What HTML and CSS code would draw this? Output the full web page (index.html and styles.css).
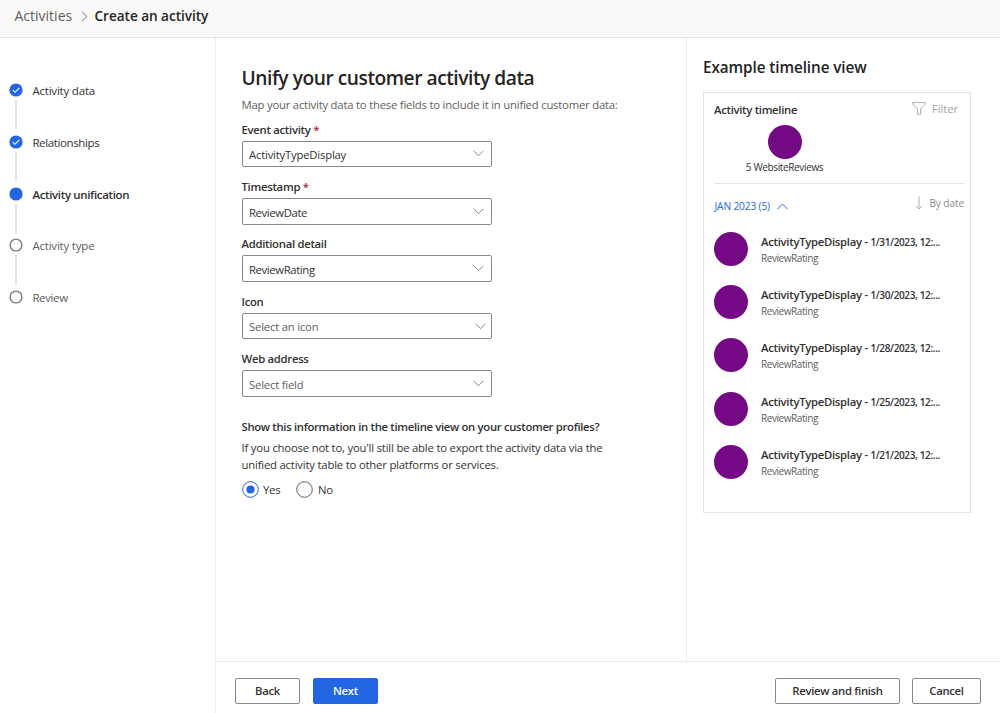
FILE: index.html
```html
<!DOCTYPE html>
<html lang="en">
<head>
<meta charset="utf-8">
<title>Create an activity</title>
<link rel="stylesheet" href="styles.css">
</head>
<body>
<header class="topbar">
  <a class="crumb">Activities</a>
  <svg class="crumb-sep" width="7" height="11" viewBox="0 0 7 11"><path d="M1 .8 5.8 5.5 1 10.2"/></svg>
  <span class="crumb-current">Create an activity</span>
</header>
<div class="body">
  <nav class="steps">
    <div class="step done"><svg class="dot" viewBox="0 0 14 14"><circle cx="7" cy="7" r="6.6"/><path d="M3.8 7.2 6 9.3 10.4 4.9"/></svg><span class="step-name">Activity data</span></div>
    <div class="step done"><svg class="dot" viewBox="0 0 14 14"><circle cx="7" cy="7" r="6.6"/><path d="M3.8 7.2 6 9.3 10.4 4.9"/></svg><span class="step-name tight">Relationships</span></div>
    <div class="step current"><svg class="dot" viewBox="0 0 14 14"><circle cx="7" cy="7" r="6.6"/></svg><span class="step-name">Activity unification</span></div>
    <div class="step todo"><svg class="dot" viewBox="0 0 14 14"><circle cx="7" cy="7" r="5.9"/></svg><span class="step-name">Activity type</span></div>
    <div class="step todo"><svg class="dot" viewBox="0 0 14 14"><circle cx="7" cy="7" r="5.9"/></svg><span class="step-name tight">Review</span></div>
  </nav>
  <div class="main">
    <div class="columns">
      <section class="form">
        <h1 class="title">Unify your customer activity data</h1>
        <p class="subtitle">Map your activity data to these fields to include it in unified customer data:</p>
        <div class="field"><label class="label">Event activity <b class="req">*</b></label><div class="select"><span>ActivityTypeDisplay</span><svg class="chev" viewBox="0 0 11 7"><path d="M.6.8 5.5 5.7 10.4.8"/></svg></div></div>
        <div class="field"><label class="label">Timestamp <b class="req">*</b></label><div class="select"><span class="tight">ReviewDate</span><svg class="chev" viewBox="0 0 11 7"><path d="M.6.8 5.5 5.7 10.4.8"/></svg></div></div>
        <div class="field"><label class="label">Additional detail</label><div class="select"><span class="tight">ReviewRating</span><svg class="chev" viewBox="0 0 11 7"><path d="M.6.8 5.5 5.7 10.4.8"/></svg></div></div>
        <div class="field"><label class="label">Icon</label><div class="select empty wide"><span>Select an icon</span><svg class="chev" viewBox="0 0 11 7"><path d="M.6.8 5.5 5.7 10.4.8"/></svg></div></div>
        <div class="field"><label class="label">Web address</label><div class="select empty"><span>Select field</span><svg class="chev" viewBox="0 0 11 7"><path d="M.6.8 5.5 5.7 10.4.8"/></svg></div></div>
        <h2 class="question">Show this information in the timeline view on your customer profiles?</h2>
        <p class="hint">If you choose not to, you'll still be able to export the activity data via the<br>unified activity table to other platforms or services.</p>
        <div class="radios">
          <label class="radio"><svg class="ring on" viewBox="0 0 17 17"><circle cx="8.5" cy="8.5" r="7.8"/><circle class="fill" cx="8.5" cy="8.5" r="4.1"/></svg><span>Yes</span></label>
          <label class="radio"><svg class="ring" viewBox="0 0 17 17"><circle cx="8.5" cy="8.5" r="7.8"/></svg><span>No</span></label>
        </div>
      </section>
      <aside class="preview">
        <h2 class="preview-title">Example timeline view</h2>
        <div class="card">
          <div class="card-head">
            <span class="card-title">Activity timeline</span>
            <span class="filter"><svg width="14" height="13" viewBox="0 0 14 13"><path d="M.7 .6H13.3V2L8.6 6.8V12.2H5.4V6.8L.7 2Z"/></svg>Filter</span>
          </div>
          <div class="summary"><i class="bubble"></i><span class="summary-text">5 WebsiteReviews</span></div>
          <div class="group">
            <span class="month">JAN 2023 (5)<svg width="11" height="7" viewBox="0 0 11 7"><path d="M.6 6 5.5 1.1 10.4 6"/></svg></span>
            <span class="sort"><svg width="8" height="14" viewBox="0 0 8 14"><path d="M4 .5V13M.8 9.8 4 13 7.2 9.8"/></svg>By date</span>
          </div>
          <div class="entry"><i class="bubble"></i><div><div class="entry-name">ActivityTypeDisplay - <span class="when">1/31/2023, 12:...</span></div><div class="entry-sub">ReviewRating</div></div></div>
          <div class="entry"><i class="bubble"></i><div><div class="entry-name">ActivityTypeDisplay - <span class="when">1/30/2023, 12:...</span></div><div class="entry-sub">ReviewRating</div></div></div>
          <div class="entry"><i class="bubble"></i><div><div class="entry-name">ActivityTypeDisplay - <span class="when">1/28/2023, 12:...</span></div><div class="entry-sub">ReviewRating</div></div></div>
          <div class="entry"><i class="bubble"></i><div><div class="entry-name">ActivityTypeDisplay - <span class="when">1/25/2023, 12:...</span></div><div class="entry-sub">ReviewRating</div></div></div>
          <div class="entry"><i class="bubble"></i><div><div class="entry-name">ActivityTypeDisplay - <span class="when">1/21/2023, 12:...</span></div><div class="entry-sub">ReviewRating</div></div></div>
        </div>
      </aside>
    </div>
    <footer class="footer">
      <button class="btn back">Back</button>
      <button class="btn primary">Next</button>
      <button class="btn finish">Review and finish</button>
      <button class="btn cancel">Cancel</button>
    </footer>
  </div>
</div>
</body>
</html>
```
FILE: styles.css
```css
* { box-sizing: border-box; }
body {
  margin: 0;
  height: 713px;
  display: flex;
  flex-direction: column;
  overflow: hidden;
  background: #fff;
  color: #323130;
  font: 11.3px/16px "Open Sans", "Noto Sans", sans-serif;
  letter-spacing: -.2px;
  white-space: nowrap;
}
h1, h2, p { margin: 0; }
svg { fill: none; flex: none; }

.topbar {
  height: 38px;
  padding: 0 14.5px 5px;
  display: flex;
  align-items: center;
  background: #faf9f8;
  border-bottom: 1px solid #e6e5e4;
  font-size: 14px;
  line-height: 20px;
}
.crumb { width: 66px; color: #605e5c; letter-spacing: 0; }
.crumb-sep { stroke: #7a7876; }
.crumb-current { margin-left: 7px; font-weight: 600; color: #252423; font-size: 13.6px; letter-spacing: -.04px; }

.body { flex: 1; display: flex; min-height: 0; }
.steps { width: 216px; padding: 45px 0 0 9.4px; border-right: 1px solid #edebe9; }
.step { position: relative; height: 51.8px; display: flex; align-items: flex-start; gap: 9px; }
.step:not(:last-child)::after {
  content: "";
  position: absolute;
  left: 6px;
  top: 17px;
  width: 1.4px;
  height: 29px;
  background: #e6e3e1;
}
.dot { width: 14px; height: 14px; }
.dot circle { fill: #2266e3; }
.dot path { stroke: #fff; stroke-width: 1.1; }
.todo .dot circle { fill: #fff; stroke: #7d7b79; stroke-width: 1.4; }
.step-name { font-size: 11.5px; }
.current .step-name { font-weight: 600; letter-spacing: -.35px; }
.todo .step-name { color: #605e5c; }
.tight { letter-spacing: -.37px; }

.main { flex: 1; display: flex; flex-direction: column; }
.columns { flex: 1; display: flex; min-height: 0; }
.form { width: 471px; padding: 26px 0 0 25.5px; border-right: 1px solid #edebe9; }
.title { font-size: 19.2px; line-height: 27px; font-weight: 600; color: #252423; letter-spacing: -.47px; }
.subtitle { margin-top: 6px; color: #605e5c; letter-spacing: -.21px; }
.field { height: 57.4px; padding-top: 8.5px; }
.label { display: block; height: 19.2px; font-weight: 600; letter-spacing: -.28px; }
.req { color: #a4262c; font-weight: 600; }
.select {
  width: 250px;
  height: 26.5px;
  padding: 0 7px 0 6.5px;
  display: flex;
  align-items: center;
  justify-content: space-between;
  border: 1px solid #8a8886;
  border-radius: 2px;
}
.select span { padding-top: 2.5px; }
.empty { color: #605e5c; }
.wide { padding-right: 5px; }
.wide span { padding-top: 1.5px; }
.chev { width: 11px; height: 7px; stroke: #7a7876; stroke-width: .9; }
.question { margin-top: 19px; font-size: 11.3px; line-height: 16px; font-weight: 600; letter-spacing: -.32px; }
.hint { margin-top: 4px; line-height: 17px; letter-spacing: -.19px; }
.radios { display: flex; gap: 16px; margin-top: 8px; }
.radio { display: flex; align-items: center; gap: 4.5px; }
.radio span { padding-top: 1.5px; }
.ring { width: 17px; height: 17px; stroke: #605e5c; }
.on { stroke: #2266e3; }
.fill { fill: #2266e3; stroke: none; }

.preview { flex: 1; padding: 18px 0 0 16px; }
.preview-title { font-size: 15.3px; line-height: 22px; font-weight: 600; color: #252423; letter-spacing: -.09px; }
.card { width: 268px; height: 421px; margin-top: 13.5px; padding: 9px 5px 0 10px; border: 1px solid #e4e3e2; }
.card-head { display: flex; justify-content: space-between; line-height: 16px; padding-right: 7px; }
.card-title { font-weight: 600; letter-spacing: -.3px; }
.filter { display: flex; align-items: center; gap: 6px; height: 14px; color: #a6a4a2; letter-spacing: -.1px; }
.filter svg, .sort svg { stroke: #b0aeac; }
.summary { width: 141px; height: 65px; padding-top: 7.5px; display: flex; flex-direction: column; align-items: center; font-size: 10px; letter-spacing: -.36px; }
.bubble { width: 34px; height: 34px; border-radius: 50%; background: #750985; flex: none; }
.group { display: flex; justify-content: space-between; border-top: 1px solid #e6e5e4; padding-top: 11.5px; height: 49px; font-size: 10px; }
.month { display: flex; align-items: center; height: 22px; gap: 7px; padding-left: .5px; color: #2266e3; font-size: 10.2px; font-weight: 500; letter-spacing: -.15px; }
.month svg { stroke: #2266e3; }
.sort { display: flex; align-items: center; height: 16px; gap: 6px; padding-right: 1px; color: #8a8886; letter-spacing: -.05px; }
.entry { display: flex; gap: 13px; height: 53.4px; }
.entry-name { margin-top: 2px; font-weight: 600; letter-spacing: -.28px; }
.when { font-size: 10px; letter-spacing: -.35px; }
.entry-sub { font-size: 10px; line-height: 16px; color: #605e5c; letter-spacing: -.43px; }

.footer { height: 52px; padding: 16px 19px 0 19px; display: flex; border-top: 1px solid #edebe9; }
.btn { height: 26px; padding: 0; border: 1px solid #8a8886; border-radius: 2px; background: #fff; color: #323130; font: 600 11.3px/16px "Open Sans", "Noto Sans", sans-serif; letter-spacing: -.3px; }
.back { width: 65px; margin-right: 13px; }
.primary { width: 65px; background: #2266e3; border-color: #2266e3; color: #fff; }
.finish { width: 125px; margin-left: auto; margin-right: 12px; }
.cancel { width: 69px; }
```
